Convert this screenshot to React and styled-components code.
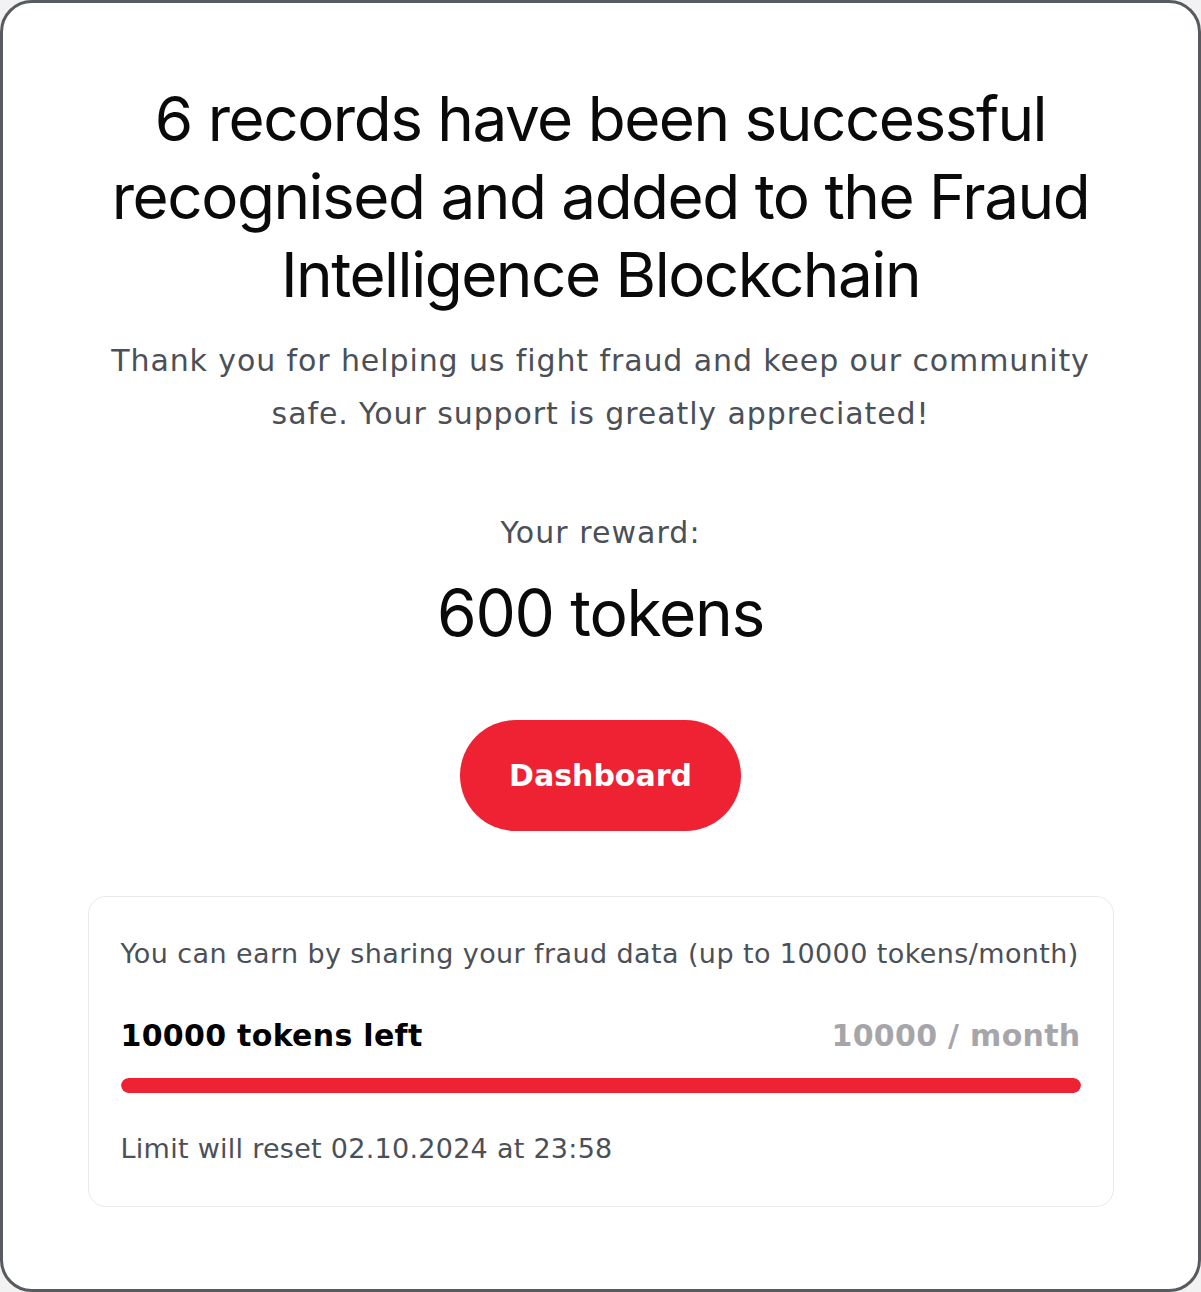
import React from 'react'
import styled, { createGlobalStyle } from 'styled-components'

const GlobalStyle = createGlobalStyle`
  html, body {
    margin: 0;
    padding: 0;
    background: #f2f2f2;
  }
  * { box-sizing: border-box; }
`

const Frame = styled.div`
  width: 1201px;
  height: 1292px;
  background: #fff;
  border: 3px solid #575b60;
  border-radius: 32px;
  display: flex;
  flex-direction: column;
  align-items: center;
  padding: 77px 85px 0;
  font-family: Inter, "Liberation Sans", sans-serif;
`

const Title = styled.h1`
  margin: 0;
  font-size: 62px;
  line-height: 78px;
  font-weight: 400;
  letter-spacing: -0.024em;
  color: #0a0a0a;
  text-align: center;
  white-space: nowrap;
`

const Lead = styled.p`
  margin: 20px 0 0;
  font-family: "DejaVu Sans", sans-serif;
  font-size: 30px;
  line-height: 53px;
  letter-spacing: 0.03em;
  color: #4b5057;
  text-align: center;
  white-space: nowrap;
`

const RewardLabel = styled.div`
  margin-top: 73px;
  font-family: "DejaVu Sans", sans-serif;
  font-size: 30px;
  line-height: 40px;
  letter-spacing: 0.035em;
  color: #4b5057;
`

const RewardValue = styled.div`
  margin-top: 24px;
  font-size: 64px;
  line-height: 72px;
  letter-spacing: -0.02em;
  color: #0a0a0a;
`

const PrimaryButton = styled.button`
  margin-top: 71px;
  width: 281px;
  height: 111px;
  border: none;
  border-radius: 56px;
  background: #ee2233;
  color: #fff;
  font-family: "DejaVu Sans", sans-serif;
  font-weight: 700;
  font-size: 30px;
  cursor: pointer;
`

const LimitCard = styled.section`
  margin-top: 65px;
  width: 1026px;
  border: 1px solid #e6eaec;
  border-radius: 18px;
  padding: 36px 32px 36px;
  font-family: "DejaVu Sans", sans-serif;
`

const Note = styled.div`
  font-size: 27px;
  line-height: 42px;
  letter-spacing: ${p => p.$tight ? '0.01em' : '0.015em'};
  color: #4b5057;
  margin-top: ${p => p.$gap || 0}px;
  white-space: nowrap;
`

const Row = styled.div`
  margin-top: 40px;
  display: flex;
  justify-content: space-between;
  align-items: center;
  font-size: 30px;
  line-height: 42px;
  font-weight: 700;
  letter-spacing: 0.01em;
`

const Left = styled.span`
  color: #000;
`

const Right = styled.span`
  color: #a6a6aa;
`

const Track = styled.div`
  margin-top: 21px;
  height: 15px;
  border-radius: 8px;
  background: #f0f0f2;
  overflow: hidden;
`

const Fill = styled.div`
  height: 100%;
  border-radius: 8px;
  background: #ee2233;
`

export default function App() {
  const left = 10000
  const limit = 10000
  return (
    <>
      <GlobalStyle />
      <Frame>
        <Title>
          6 records have been successful<br />
          recognised and added to the Fraud<br />
          Intelligence Blockchain
        </Title>
        <Lead>
          Thank you for helping us fight fraud and keep our community<br />
          safe. Your support is greatly appreciated!
        </Lead>
        <RewardLabel>Your reward:</RewardLabel>
        <RewardValue>600 tokens</RewardValue>
        <PrimaryButton>Dashboard</PrimaryButton>
        <LimitCard>
          <Note>You can earn by sharing your fraud data (up to 10000 tokens/month)</Note>
          <Row>
            <Left>{left} tokens left</Left>
            <Right>{limit} / month</Right>
          </Row>
          <Track>
            <Fill style={{ width: `${(left / limit) * 100}%` }} />
          </Track>
          <Note $gap={35} $tight>Limit will reset 02.10.2024 at 23:58</Note>
        </LimitCard>
      </Frame>
    </>
  )
}
